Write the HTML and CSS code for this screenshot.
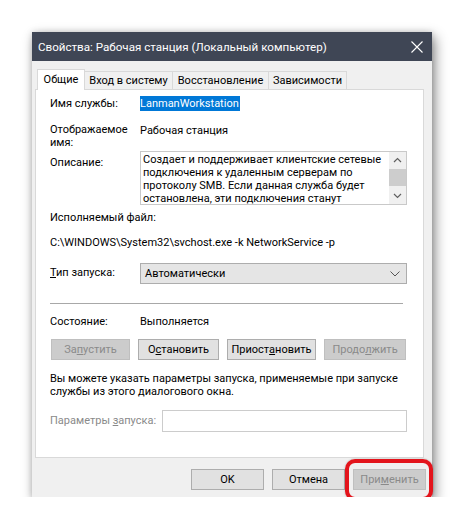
FILE: index.html
```html
<!DOCTYPE html>
<html lang="ru">
<head>
<meta charset="utf-8">
<title>Свойства</title>
<link rel="stylesheet" href="styles.css">
</head>
<body>
<div class="stage">
  <div class="window">
    <div class="titlebar">
      <span class="title">Свойства: Рабочая станция (Локальный компьютер)</span>
      <svg class="close" width="12" height="12" viewBox="0 0 12 12"><path d="M0.5 0.5 L11.5 11.5 M11.5 0.5 L0.5 11.5" stroke="#ffffff" stroke-width="1.1" fill="none"/></svg>
    </div>
    <div class="wbody">
      <div class="tabs">
        <div class="tab active t1">Общие</div>
        <div class="tab t2">Вход в систему</div>
        <div class="tab t3">Восстановление</div>
        <div class="tab t4">Зависимости</div>
      </div>
      <div class="panel">
        <div class="row r1">
          <div class="label">Имя службы:</div>
          <div class="value"><span class="sel">LanmanWorkstation</span></div>
        </div>
        <div class="row r2">
          <div class="label">Отображаемое<br>имя:</div>
          <div class="value">Рабочая станция</div>
        </div>
        <div class="row r3">
          <div class="label lpad5">Описание:</div>
          <div class="desc">
            <div class="desc-text">Создает и поддерживает клиентские сетевые<br>подключения к удаленным серверам по<br>протоколу SMB. Если данная служба будет<br>остановлена, эти подключения станут</div>
            <div class="scroll">
              <svg class="arr" width="17" height="17" viewBox="0 0 17 17"><path d="M5 10 L8.5 6.5 L12 10" stroke="#606060" stroke-width="1.2" fill="none"/></svg>
              <div class="thumb"></div>
              <svg class="arr" width="17" height="17" viewBox="0 0 17 17"><path d="M5 7 L8.5 10.5 L12 7" stroke="#606060" stroke-width="1.2" fill="none"/></svg>
            </div>
          </div>
        </div>
        <div class="line r4">Исполняемый файл:</div>
        <div class="line r5">C:\WINDOWS\System32\svchost.exe -k NetworkService -p</div>
        <div class="row r6">
          <div class="label lpad3"><u>Т</u>ип запуска:</div>
          <div class="combo">
            <span>Автоматически</span>
            <svg width="10" height="6" viewBox="0 0 10 6"><path d="M0.5 0.5 L5 5 L9.5 0.5" stroke="#555" stroke-width="1" fill="none"/></svg>
          </div>
        </div>
        <div class="sep"></div>
        <div class="row r7">
          <div class="label">Состояние:</div>
          <div class="value">Выполняется</div>
        </div>
        <div class="btnrow">
          <div class="btn dis w79">За<u>п</u>устить</div>
          <div class="btn w81">О<u>с</u>тановить</div>
          <div class="btn w89">Приост<u>а</u>новить</div>
          <div class="btn dis w82">Продо<u>л</u>жить</div>
        </div>
        <div class="line r8">Вы можете указать параметры запуска, применяемые при запуске<br>службы из этого диалогового окна.</div>
        <div class="row r9">
          <div class="plabel">Параметры <u>з</u>апуска:</div>
          <div class="pinput"></div>
        </div>
      </div>
      <div class="footer">
        <div class="btn fb">OK</div>
        <div class="btn fb">Отмена</div>
        <div class="mark"><div class="btn fb dis">При<u>м</u>енить</div></div>
      </div>
    </div>
  </div>
</div>
</body>
</html>
```
FILE: styles.css
```css
html, body {
  margin: 0;
  padding: 0;
  background: #ffffff;
}
body {
  font-family: Roboto, "Liberation Sans", Arial, sans-serif;
  font-size: 11px;
  color: #000;
}
.stage {
  padding: 32px 0 0 32px;
}
.window {
  width: 400px;
  height: 465px;
  background: #f0f0f0;
  box-shadow: 3px 5px 12px rgba(0,0,0,0.45), 0 0 6px rgba(0,0,0,0.15);
  display: flex;
  flex-direction: column;
}
.titlebar {
  height: 29px;
  background: #3f4655;
  display: flex;
  align-items: center;
  justify-content: space-between;
  padding: 0 9px 0 6px;
  flex: none;
}
.title {
  color: #ffffff;
  font-size: 11.6px;
}
.close {
  display: block;
}
.wbody {
  flex: 1;
  display: flex;
  flex-direction: column;
  padding: 8px 8px 0 3px;
}
.tabs {
  display: flex;
  align-items: flex-end;
  height: 20px;
  padding-left: 2px;
  position: relative;
  z-index: 1;
}
.tab {
  height: 18px;
  line-height: 17px;
  text-align: center;
  background: #f0f0f0;
  border: 1px solid #d9d9d9;
  border-bottom: none;
  box-sizing: border-box;
  margin-left: -1px;
  white-space: nowrap;
}
.tab.active {
  height: 21px;
  background: #ffffff;
  line-height: 20px;
  margin-bottom: -1px;
  margin-left: 0;
}
.t1 { width: 48px; }
.t2 { width: 89px; }
.t3 { width: 97px; }
.t4 { width: 79px; }
.panel {
  height: 369px;
  box-sizing: border-box;
  background: #ffffff;
  border: 1px solid #d9d9d9;
  padding: 7px 16px 0 14px;
  display: flex;
  flex-direction: column;
  flex: none;
}
.row {
  display: flex;
  align-items: flex-start;
  line-height: 14px;
}
.label {
  width: 90px;
  flex: none;
  white-space: nowrap;
}
.lpad5 { padding-top: 5px; }
.lpad3 { padding-top: 3px; }
.value {
  flex: 1;
}
.sel {
  background: #0078d7;
  color: #ffffff;
  padding: 1px 1px 1px 0;
}
.r2 { margin-top: 12px; }
.r2 .label { line-height: 13px; padding-bottom: 2px; }
.r2 .value { padding-top: 1px; }
.desc {
  flex: 1;
  height: 54px;
  box-sizing: border-box;
  border: 1px solid #c9c9c9;
  display: flex;
  overflow: hidden;
}
.desc-text {
  flex: 1;
  padding: 1px 2px 0 2px;
  line-height: 13px;
  overflow: hidden;
  white-space: nowrap;
}
.scroll {
  width: 17px;
  flex: none;
  background: #f0f0f0;
  display: flex;
  flex-direction: column;
}
.arr { display: block; flex: none; }
.thumb {
  height: 18px;
  background: #cdcdcd;
  margin: 0 0 1px 0;
}
.line {
  line-height: 14px;
  white-space: nowrap;
}
.r4 { margin-top: 6px; }
.r5 { margin-top: 11px; }
.r6 { margin-top: 13px; }
.combo {
  flex: 1;
  height: 21px;
  box-sizing: border-box;
  background: #e5e5e5;
  border: 1px solid #adadad;
  display: flex;
  align-items: center;
  justify-content: space-between;
  padding: 0 6px 0 4px;
}
.sep {
  margin-top: 19px;
  margin-right: 4px;
  height: 1px;
  background: #a8a8a8;
  flex: none;
}
.r7 { margin-top: 11px; }
.btnrow {
  margin-top: 10px;
  display: flex;
  gap: 8px;
  padding-left: 1px;
}
.btn {
  height: 21px;
  box-sizing: border-box;
  background: #e1e1e1;
  border: 1px solid #adadad;
  display: flex;
  align-items: center;
  justify-content: center;
  flex: none;
}
.btn.dis {
  background: #cccccc;
  border-color: #bfbfbf;
  color: #8a8a8a;
}
.w79 { width: 79px; }
.w81 { width: 81px; }
.w82 { width: 82px; }
.w89 { width: 89px; }
.r8 { margin-top: 12px; line-height: 13px; padding-bottom: 2px; }
.r9 {
  margin-top: 10px;
  align-items: center;
}
.plabel {
  width: 112px;
  color: #8a8a8a;
  flex: none;
  white-space: nowrap;
}
.pinput {
  flex: 1;
  height: 22px;
  box-sizing: border-box;
  border: 1px solid #cccccc;
  background: #ffffff;
}
.footer {
  display: flex;
  justify-content: flex-end;
  gap: 8px;
  padding: 11px 0 0 0;
  margin-right: -2px;
}
.fb {
  width: 73px;
  height: 21px;
}
.mark {
  position: relative;
}
.mark::after {
  content: "";
  position: absolute;
  left: -8px;
  right: -7px;
  top: -10px;
  bottom: -11px;
  border: 4px solid #e3141c;
  border-radius: 10px;
  box-shadow: 0 0 2px rgba(0,0,0,0.3);
}
```
